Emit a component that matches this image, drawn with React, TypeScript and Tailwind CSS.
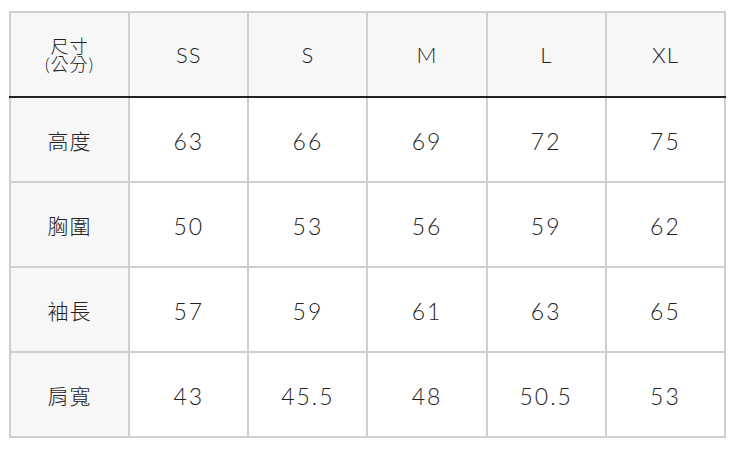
const sizes = ['SS', 'S', 'M', 'L', 'XL']

const rows = [
  { label: '高度', values: ['63', '66', '69', '72', '75'] },
  { label: '胸圍', values: ['50', '53', '56', '59', '62'] },
  { label: '袖長', values: ['57', '59', '61', '63', '65'] },
  { label: '肩寬', values: ['43', '45.5', '48', '50.5', '53'] },
]

export default function App() {
  return (
    <div className="min-h-screen bg-white pt-[11px] pl-[9px]">
      <table className="w-[717px] table-fixed border-collapse text-[#222] font-['Lato','Noto_Sans_CJK_TC',sans-serif]">
        <thead>
          <tr className="h-[85px] bg-[#f7f7f7]">
            <th className="border-2 border-[#cfcfcf] border-b-[#222] font-light text-[18px] leading-[18px] tracking-[1px]">
              <div>尺寸</div>
              <div>(公分)</div>
            </th>
            {sizes.map((s) => (
              <th
                key={s}
                className="border-2 border-[#cfcfcf] border-b-[#222] font-light text-[22px] tracking-[1px]"
              >
                {s}
              </th>
            ))}
          </tr>
        </thead>
        <tbody>
          {rows.map((r) => (
            <tr key={r.label} className="h-[85px]">
              <td className="border-2 border-[#cfcfcf] bg-[#f7f7f7] text-center text-[21px] font-light pt-[2px] tracking-[1px]">
                {r.label}
              </td>
              {r.values.map((v, i) => (
                <td
                  key={i}
                  className="border-2 border-[#cfcfcf] bg-white text-center text-[23px] font-light pt-[3px] tracking-[2px]"
                >
                  {v}
                </td>
              ))}
            </tr>
          ))}
        </tbody>
      </table>
    </div>
  )
}
